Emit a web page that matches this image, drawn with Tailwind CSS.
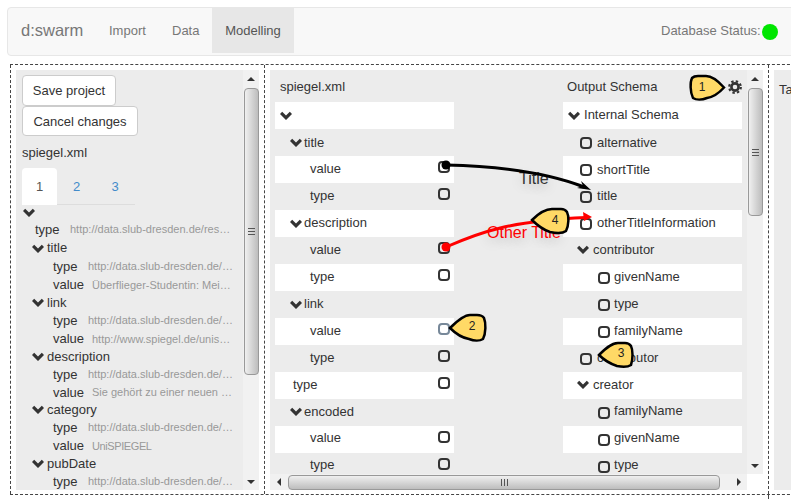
<!DOCTYPE html>
<html lang="en">
<head>
<meta charset="UTF-8">
<script src="https://cdn.jsdelivr.net/npm/@tailwindcss/browser@4"></script>
<title>d:swarm</title>
</head>
<body class="bg-white overflow-hidden font-['Liberation_Sans',Arial,sans-serif] text-[13px] text-[#333]">
<div class="relative w-[791px] h-[499px] overflow-hidden">

  <!-- navbar -->
  <div class="absolute left-0 top-0 w-[791px] pl-[7px] pt-[7px]">
    <nav class="flex items-start h-[49px] w-[800px] bg-[#f8f8f8] border border-[#e7e7e7] rounded text-[#777]">
      <span class="ml-[13px] w-[75px] h-[45px] flex items-center text-[16.5px]">d:swarm</span>
      <span class="w-[76px] h-[45px] pl-[13px] flex items-center">Import</span>
      <span class="w-[40px] h-[45px] flex items-center">Data</span>
      <span class="h-[45px] w-[82px] bg-[#e7e7e7] text-[#555] flex items-center justify-center">Modelling</span>
      <span class="ml-[367px] h-[45px] w-[101px] flex items-center">Database Status:</span>
      <span class="w-4 h-4 mt-[16px] rounded-full bg-[#00e600]"></span>
    </nav>
  </div>

  <!-- panels -->
  <div class="absolute left-[10px] top-[64px] w-[800px] h-[431px] flex border-t border-b border-dashed border-[#444]">

    <div class="w-[255px] h-full border-l border-r border-dashed border-[#444] p-[5px] flex">
      <div class="w-[227px] h-[420px] bg-[#ececec] overflow-hidden pl-[6px] pt-[5px]">
        <button class="block h-[31px] w-[94px] bg-white border border-[#ccc] rounded text-[#333]">Save project</button>
        <button class="block h-[30px] w-[116px] pt-[1px] bg-white border border-[#ccc] rounded text-[#333]">Cancel changes</button>
        <div class="mt-[7px] h-[20px] leading-[20px]">spiegel.xml</div>
        <div class="mt-[5px] flex w-[113px] h-[37px] border-b border-[#ddd] text-[#428bca]">
          <span class="w-[35px] h-[37px] pt-[1px] bg-white rounded-t flex items-center justify-center text-[#555]">1</span>
          <span class="w-[39px] pt-[1px] flex items-center justify-center">2</span>
          <span class="w-[38px] pt-[1px] flex items-center justify-center">3</span>
        </div>
        <div class="h-[15px] pl-[1px] flex items-center">
          <svg class="w-[12px] h-[9px]" viewBox="0 0 12 9"><path d="M0 3 2.200 .8 6 4.500 9.800 .8 12 3 6 9Z" fill="#333"/></svg>
        </div>
        <div class="flex flex-col">
          <div class="h-[19px] flex items-center pl-[13px]"><span class="w-[35px] shrink-0">type</span><span class="w-[161px] truncate text-[11px] text-[#999]">http://data.slub-dresden.de/resources/1</span></div>
          <div class="h-[18px] flex items-center pl-[10px] gap-[3px]"><svg class="w-[12px] h-[9px]" viewBox="0 0 12 9"><path d="M0 3 2.200 .8 6 4.500 9.800 .8 12 3 6 9Z" fill="#333"/></svg><span>title</span></div>
          <div class="h-[19px] flex items-center pl-[31px]"><span class="w-[35px] shrink-0">type</span><span class="w-[145px] truncate text-[11px] text-[#999]">http://data.slub-dresden.de/resources/1</span></div>
          <div class="h-[18px] flex items-center pl-[31px]"><span class="w-[39px] shrink-0">value</span><span class="w-[141px] truncate text-[11px] text-[#999]">Überflieger-Studentin: Mein Leben</span></div>
          <div class="h-[17px] flex items-center pl-[10px] gap-[3px]"><svg class="w-[12px] h-[9px]" viewBox="0 0 12 9"><path d="M0 3 2.200 .8 6 4.500 9.800 .8 12 3 6 9Z" fill="#333"/></svg><span>link</span></div>
          <div class="h-[19px] flex items-center pl-[31px]"><span class="w-[35px] shrink-0">type</span><span class="w-[145px] truncate text-[11px] text-[#999]">http://data.slub-dresden.de/resources/1</span></div>
          <div class="h-[18px] flex items-center pl-[31px]"><span class="w-[39px] shrink-0">value</span><span class="w-[143px] truncate text-[11px] text-[#999]">http://www.spiegel.de/unispiegel/studium</span></div>
          <div class="h-[17px] flex items-center pl-[10px] gap-[3px]"><svg class="w-[12px] h-[9px]" viewBox="0 0 12 9"><path d="M0 3 2.200 .8 6 4.500 9.800 .8 12 3 6 9Z" fill="#333"/></svg><span>description</span></div>
          <div class="h-[19px] flex items-center pl-[31px]"><span class="w-[35px] shrink-0">type</span><span class="w-[145px] truncate text-[11px] text-[#999]">http://data.slub-dresden.de/resources/1</span></div>
          <div class="h-[17px] flex items-center pl-[31px]"><span class="w-[39px] shrink-0">value</span><span class="w-[141px] truncate text-[11px] text-[#999]">Sie gehört zu einer neuen Generation</span></div>
          <div class="h-[17px] flex items-center pl-[10px] gap-[3px]"><svg class="w-[12px] h-[9px]" viewBox="0 0 12 9"><path d="M0 3 2.200 .8 6 4.500 9.800 .8 12 3 6 9Z" fill="#333"/></svg><span>category</span></div>
          <div class="h-[19px] flex items-center pl-[31px]"><span class="w-[35px] shrink-0">type</span><span class="w-[145px] truncate text-[11px] text-[#999]">http://data.slub-dresden.de/resources/1</span></div>
          <div class="h-[18px] flex items-center pl-[31px]"><span class="w-[39px] shrink-0">value</span><span class="w-[141px] truncate text-[11px] tracking-[-0.4px] text-[#999]">UniSPIEGEL</span></div>
          <div class="h-[17px] flex items-center pl-[10px] gap-[3px]"><svg class="w-[12px] h-[9px]" viewBox="0 0 12 9"><path d="M0 3 2.200 .8 6 4.500 9.800 .8 12 3 6 9Z" fill="#333"/></svg><span>pubDate</span></div>
          <div class="h-[19px] flex items-center pl-[31px]"><span class="w-[35px] shrink-0">type</span><span class="w-[145px] truncate text-[11px] text-[#999]">http://data.slub-dresden.de/resources/1</span></div>
        </div>
      </div>
      <!-- scrollbar -->
      <div class="w-[16px] h-[420px] bg-[#f1f1f1] flex flex-col items-center">
        <div class="h-[18px] flex items-center"><div class="w-0 h-0 border-x-[4px] border-x-transparent border-b-[4px] border-b-[#333]"></div></div>
        <div class="w-[15px] h-[287px] border border-[#999] rounded-sm bg-gradient-to-r from-[#f0f0f0] to-[#bdbdbd] flex items-center justify-center"><div class="w-[7px] h-[7px] border-y border-[#555] flex items-center"><div class="w-full h-px bg-[#555]"></div></div></div>
        <div class="mt-auto h-[16px] flex items-center"><div class="w-0 h-0 border-x-[4px] border-x-transparent border-t-[4px] border-t-[#333]"></div></div>
      </div>
    </div>

    <div class="w-[504px] h-full border-r border-dashed border-[#444] p-[5px] flex">
      <div class="w-[478px] h-[420px] flex flex-col">
        <div class="flex-1 bg-[#ececec] overflow-hidden flex justify-between pl-[5px] pr-[5px]">
          <div class="w-[179px]">
            <div class="h-[32px] pl-[5px] pt-[2px] flex items-center">spiegel.xml</div>
            <div class="h-[27px] bg-white pl-[5px] pb-[1px] flex items-center"><svg class="w-[12px] h-[9px]" viewBox="0 0 12 9"><path d="M0 3 2.200 .8 6 4.500 9.800 .8 12 3 6 9Z" fill="#333"/></svg></div>
            <div class="h-[27px] pl-[15px] gap-[2px] flex items-center"><svg class="w-[12px] h-[9px]" viewBox="0 0 12 9"><path d="M0 3 2.200 .8 6 4.500 9.800 .8 12 3 6 9Z" fill="#333"/></svg>title</div>
            <div class="h-[27px] bg-white pl-[35px] pr-[4px] pb-[2px] flex items-center justify-between">value<span class="w-[12px] h-[12px] mb-[4px] border-2 border-[#333] rounded-[4px]"></span></div>
            <div class="h-[27px] pl-[35px] pr-[4px] pb-[2px] flex items-center justify-between">type<span class="w-[12px] h-[12px] mb-[4px] border-2 border-[#333] rounded-[4px]"></span></div>
            <div class="h-[27px] bg-white pl-[15px] pb-[1px] gap-[2px] flex items-center"><svg class="w-[12px] h-[9px]" viewBox="0 0 12 9"><path d="M0 3 2.200 .8 6 4.500 9.800 .8 12 3 6 9Z" fill="#333"/></svg>description</div>
            <div class="h-[27px] pl-[35px] pr-[4px] pb-[2px] flex items-center justify-between">value<span class="w-[12px] h-[12px] mb-[4px] border-2 border-[#333] rounded-[4px]"></span></div>
            <div class="h-[27px] bg-white pl-[35px] pr-[4px] pb-[2px] flex items-center justify-between">type<span class="w-[12px] h-[12px] mb-[4px] border-2 border-[#333] rounded-[4px]"></span></div>
            <div class="h-[27px] pl-[15px] pb-[1px] gap-[2px] flex items-center"><svg class="w-[12px] h-[9px]" viewBox="0 0 12 9"><path d="M0 3 2.200 .8 6 4.500 9.800 .8 12 3 6 9Z" fill="#333"/></svg>link</div>
            <div class="h-[27px] bg-white pl-[35px] pr-[4px] pb-[2px] flex items-center justify-between">value<span class="w-[12px] h-[12px] mb-[4px] border-2 border-[#778899] rounded-[4px]"></span></div>
            <div class="h-[27px] pl-[35px] pr-[4px] pb-[2px] flex items-center justify-between">type<span class="w-[12px] h-[12px] mb-[4px] border-2 border-[#333] rounded-[4px]"></span></div>
            <div class="h-[27px] bg-white pl-[18px] pr-[4px] pb-[2px] flex items-center justify-between">type<span class="w-[12px] h-[12px] mb-[4px] border-2 border-[#333] rounded-[4px]"></span></div>
            <div class="h-[27px] pl-[15px] pb-[2px] gap-[2px] flex items-center"><svg class="w-[12px] h-[9px]" viewBox="0 0 12 9"><path d="M0 3 2.200 .8 6 4.500 9.800 .8 12 3 6 9Z" fill="#333"/></svg>encoded</div>
            <div class="h-[27px] bg-white pl-[35px] pr-[4px] pb-[3px] flex items-center justify-between">value<span class="w-[12px] h-[12px] mb-[3px] border-2 border-[#333] rounded-[4px]"></span></div>
            <div class="h-[27px] pl-[35px] pr-[4px] pb-[3px] flex items-center justify-between">type<span class="w-[12px] h-[12px] mb-[3px] border-2 border-[#333] rounded-[4px]"></span></div>
          </div>
          <div class="w-[179px]">
            <div class="h-[32px] pl-[4px] pt-[2px] flex items-center justify-between">Output Schema
              <svg class="w-[14px] h-[14px]" viewBox="0 0 14 14"><circle cx="7" cy="7" r="3.6" fill="none" stroke="#333" stroke-width="2.6"/><circle cx="7" cy="7" r="5.8" fill="none" stroke="#333" stroke-width="2.2" stroke-dasharray="2.4 2.16"/></svg>
            </div>
            <div class="h-[27px] bg-white pl-[5px] pb-[1px] gap-[4px] flex items-center"><svg class="w-[12px] h-[9px]" viewBox="0 0 12 9"><path d="M0 3 2.200 .8 6 4.500 9.800 .8 12 3 6 9Z" fill="#333"/></svg>Internal Schema</div>
            <div class="h-[27px] pl-[17px] gap-[5px] flex items-center"><span class="w-[12px] h-[12px] border-2 border-[#333] rounded-[4px]"></span>alternative</div>
            <div class="h-[27px] bg-white pl-[17px] gap-[5px] flex items-center"><span class="w-[12px] h-[12px] border-2 border-[#333] rounded-[4px]"></span>shortTitle</div>
            <div class="h-[27px] pl-[17px] pb-[2px] gap-[5px] flex items-center"><span class="w-[12px] h-[12px] mt-[2px] border-2 border-[#333] rounded-[4px]"></span>title</div>
            <div class="h-[27px] bg-white pl-[17px] pb-[2px] gap-[5px] flex items-center"><span class="w-[12px] h-[12px] mt-[2px] border-2 border-[#333] rounded-[4px]"></span>otherTitleInformation</div>
            <div class="h-[27px] pl-[14px] pb-[2px] gap-[4px] flex items-center"><svg class="w-[12px] h-[9px]" viewBox="0 0 12 9"><path d="M0 3 2.200 .8 6 4.500 9.800 .8 12 3 6 9Z" fill="#333"/></svg>contributor</div>
            <div class="h-[27px] bg-white pl-[35px] pb-[2px] gap-[4px] flex items-center"><span class="w-[12px] h-[12px] mt-[2px] border-2 border-[#333] rounded-[4px]"></span>givenName</div>
            <div class="h-[27px] pl-[35px] pb-[2px] gap-[4px] flex items-center"><span class="w-[12px] h-[12px] mt-[2px] border-2 border-[#333] rounded-[4px]"></span>type</div>
            <div class="h-[27px] bg-white pl-[35px] pb-[2px] gap-[4px] flex items-center"><span class="w-[12px] h-[12px] mt-[2px] border-2 border-[#333] rounded-[4px]"></span>familyName</div>
            <div class="h-[27px] pl-[17px] pb-[2px] gap-[5px] flex items-center"><span class="w-[12px] h-[12px] mt-[2px] border-2 border-[#333] rounded-[4px]"></span>contributor</div>
            <div class="h-[27px] bg-white pl-[14px] pb-[2px] gap-[4px] flex items-center"><svg class="w-[12px] h-[9px]" viewBox="0 0 12 9"><path d="M0 3 2.200 .8 6 4.500 9.800 .8 12 3 6 9Z" fill="#333"/></svg>creator</div>
            <div class="h-[27px] pl-[35px] pb-[3px] gap-[4px] flex items-center"><span class="w-[12px] h-[12px] mt-[3px] border-2 border-[#333] rounded-[4px]"></span>familyName</div>
            <div class="h-[27px] bg-white pl-[35px] pb-[3px] gap-[4px] flex items-center"><span class="w-[12px] h-[12px] mt-[3px] border-2 border-[#333] rounded-[4px]"></span>givenName</div>
            <div class="h-[27px] pl-[35px] pb-[3px] gap-[4px] flex items-center"><span class="w-[12px] h-[12px] mt-[3px] border-2 border-[#333] rounded-[4px]"></span>type</div>
          </div>
        </div>
        <!-- horizontal scrollbar -->
        <div class="h-[16px] bg-[#f1f1f1] flex items-center">
          <div class="w-[18px] flex justify-center"><div class="w-0 h-0 border-y-[4px] border-y-transparent border-r-[4px] border-r-[#333]"></div></div>
          <div class="w-[432px] h-[15px] border border-[#999] rounded-sm bg-gradient-to-b from-[#f0f0f0] to-[#bdbdbd] flex items-center justify-center"><div class="w-[7px] h-[7px] border-x border-[#555] flex justify-center"><div class="h-full w-px bg-[#555]"></div></div></div>
          <div class="ml-auto w-[16px] flex justify-center"><div class="w-0 h-0 border-y-[4px] border-y-transparent border-l-[4px] border-l-[#333]"></div></div>
        </div>
      </div>
      <div class="w-[16px] h-[404px] bg-[#f1f1f1] flex flex-col items-center">
        <div class="h-[18px] flex items-center"><div class="w-0 h-0 border-x-[4px] border-x-transparent border-b-[4px] border-b-[#333]"></div></div>
        <div class="w-[15px] h-[128px] border border-[#999] rounded-sm bg-gradient-to-r from-[#f0f0f0] to-[#bdbdbd] flex items-center justify-center"><div class="w-[7px] h-[7px] border-y border-[#555] flex items-center"><div class="w-full h-px bg-[#555]"></div></div></div>
        <div class="mt-auto h-[16px] flex items-center"><div class="w-0 h-0 border-x-[4px] border-x-transparent border-t-[4px] border-t-[#333]"></div></div>
      </div>
    </div>

    <div class="flex-1 pl-[5px] pt-[5px]">
      <div class="h-[420px] bg-[#ececec] pl-[5px] pt-[10px] leading-[20px]">Target</div>
    </div>
  </div>
  <div class="absolute left-[768px] top-[495px] h-[4px] border-l border-dashed border-[#444]"></div>

  <!-- connector labels -->
  <span class="absolute left-[519px] top-[170px] text-base leading-[18px] text-[#333] [text-shadow:0_4px_12px_rgba(0,0,0,0.22)]">Title</span>
  <span class="absolute left-[487px] top-[224px] text-base leading-[18px] text-[#f00] [text-shadow:0_4px_12px_rgba(0,0,0,0.22)]">Other Title</span>

  <!-- connectors and callouts drawn over the panels -->
  <svg class="absolute left-0 top-0 pointer-events-none" width="791" height="499" viewBox="0 0 791 499">
    <path d="M446 165 C490 166 540 170 584 187" fill="none" stroke="#000" stroke-width="3"/>
    <path d="M591 190 L581 181 L583 186 L577 188 Z" fill="#000"/>
    <circle cx="446" cy="165" r="4.5" fill="#000"/>
    <path d="M446 247 C480 232 510 221 586 217.500" fill="none" stroke="#f00" stroke-width="3"/>
    <path d="M592 217 L583 212 L584 221 Z" fill="#f00"/>
    <circle cx="446" cy="247" r="4.5" fill="#f00"/>

    <path d="M698 76 H706 C713 76 720 83 724 87.500 C720 92 713 97 707 98 C702 100 696 100 693 98 C690 92 690 82 692 78 C694 76 696 76 698 76 Z" fill="#ffd966" stroke="#000" stroke-width="2.500"/>
    <path d="M477 315 H470 C463 315 455 323 450 328 C455 333 463 338 469 339 C474 341 480 341 483 339 C486 333 486 323 484 318 C482 315 480 315 477 315 Z" fill="#ffd966" stroke="#000" stroke-width="2.500"/>
    <path d="M625 343 H618 C611 343 604 350 599 355 C604 360 611 364 617 366 C622 367 628 367 631 365 C633 359 633 350 631 346 C629 343 627 343 625 343 Z" fill="#ffd966" stroke="#000" stroke-width="2.500"/>
    <path d="M561 209 H552 C545 209 537 215 532 220 C537 225 544 230 550 232 C555 233 562 234 566 231 C569 225 569 216 567 212 C565 209 563 209 561 209 Z" fill="#ffd966" stroke="#000" stroke-width="2.500"/>
  </svg>
  <span class="absolute left-[695px] top-[79px] w-[14px] text-center text-xs leading-[16px] text-[#222]">1</span>
  <span class="absolute left-[465px] top-[318px] w-[14px] text-center text-xs leading-[16px] text-[#222]">2</span>
  <span class="absolute left-[614px] top-[345px] w-[14px] text-center text-xs leading-[16px] text-[#222]">3</span>
  <span class="absolute left-[548px] top-[212px] w-[14px] text-center text-xs leading-[16px] text-[#222]">4</span>
</div>
</body>
</html>
